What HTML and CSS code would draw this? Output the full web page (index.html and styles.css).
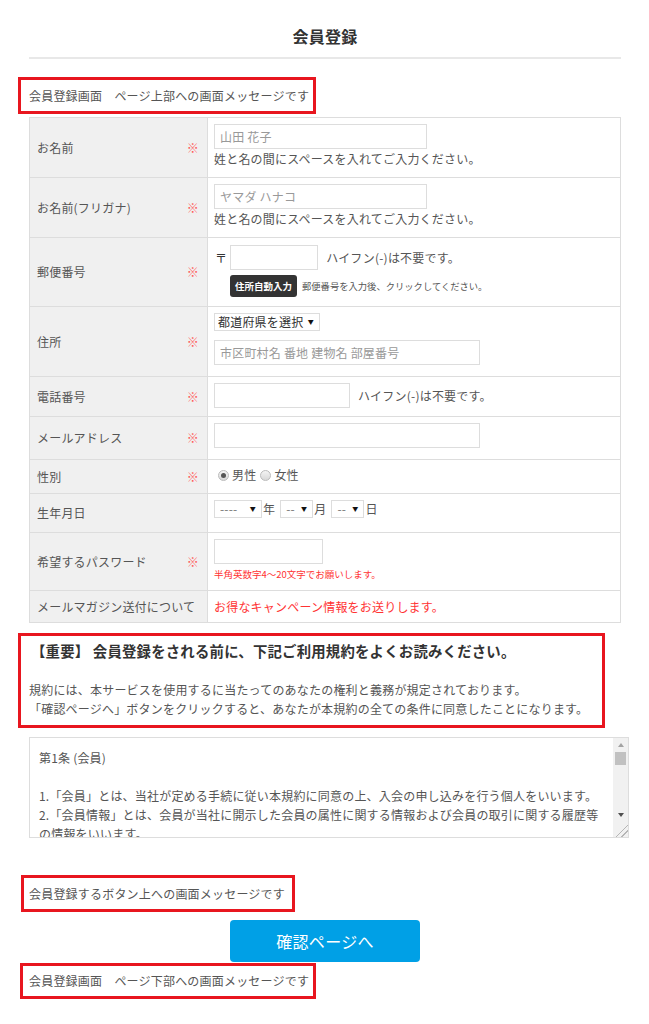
FILE: index.html
```html
<!DOCTYPE html>
<html lang="ja">
<head>
<meta charset="utf-8">
<title>会員登録</title>
<link rel="stylesheet" href="styles.css">
</head>
<body>
<div class="page">
  <h1 class="title">会員登録</h1>

  <p class="msg msg-top">会員登録画面　ページ上部への画面メッセージです</p>

  <div class="form">
    <div class="row row-name">
      <div class="label"><span>お名前</span><span class="req">※</span></div>
      <div class="val">
        <input class="in w-name" type="text" placeholder="山田 花子">
        <p class="hint">姓と名の間にスペースを入れてご入力ください。</p>
      </div>
    </div>
    <div class="row row-name">
      <div class="label"><span>お名前(フリガナ)</span><span class="req">※</span></div>
      <div class="val">
        <input class="in w-name" type="text" placeholder="ヤマダ ハナコ">
        <p class="hint">姓と名の間にスペースを入れてご入力ください。</p>
      </div>
    </div>
    <div class="row row-zip">
      <div class="label"><span>郵便番号</span><span class="req">※</span></div>
      <div class="val val-zip">
        <div class="line">
          <span class="zipmark">〒</span>
          <input class="in w-zip" type="text">
          <span class="note">ハイフン(-)は不要です。</span>
        </div>
        <div class="line line-auto">
          <button class="btn-auto" type="button">住所自動入力</button>
          <span class="tiny">郵便番号を入力後、クリックしてください。</span>
        </div>
      </div>
    </div>
    <div class="row row-addr">
      <div class="label"><span>住所</span><span class="req">※</span></div>
      <div class="val">
        <span class="sel sel-pref"><select><option>都道府県を選択</option></select></span>
        <input class="in w-wide addr" type="text" placeholder="市区町村名 番地 建物名 部屋番号">
      </div>
    </div>
    <div class="row row-tel">
      <div class="label"><span>電話番号</span><span class="req">※</span></div>
      <div class="val">
        <div class="line">
          <input class="in w-tel" type="text">
          <span class="note">ハイフン(-)は不要です。</span>
        </div>
      </div>
    </div>
    <div class="row row-mail">
      <div class="label"><span>メールアドレス</span><span class="req">※</span></div>
      <div class="val">
        <input class="in w-wide" type="text">
      </div>
    </div>
    <div class="row row-sex">
      <div class="label"><span>性別</span><span class="req">※</span></div>
      <div class="val">
        <div class="line radios">
          <label class="rd"><input type="radio" name="sex" checked>男性</label>
          <label class="rd"><input type="radio" name="sex">女性</label>
        </div>
      </div>
    </div>
    <div class="row row-birth">
      <div class="label"><span>生年月日</span></div>
      <div class="val">
        <div class="line birth">
          <span class="sel sel-y"><select><option>----</option></select></span><span class="unit">年</span>
          <span class="sel sel-md"><select><option>--</option></select></span><span class="unit">月</span>
          <span class="sel sel-md"><select><option>--</option></select></span><span class="unit">日</span>
        </div>
      </div>
    </div>
    <div class="row row-pass">
      <div class="label"><span>希望するパスワード</span><span class="req">※</span></div>
      <div class="val">
        <input class="in w-pass" type="password">
        <p class="pass-note">半角英数字4～20文字でお願いします。</p>
      </div>
    </div>
    <div class="row row-mag">
      <div class="label"><span>メールマガジン送付について</span></div>
      <div class="val">
        <p class="red">お得なキャンペーン情報をお送りします。</p>
      </div>
    </div>
  </div>

  <div class="msg msg-terms">
    <h2 class="terms-title">【重要】 会員登録をされる前に、下記ご利用規約をよくお読みください。</h2>
    <p class="terms-text">規約には、本サービスを使用するに当たってのあなたの権利と義務が規定されております。<br>「確認ページへ」ボタンをクリックすると、あなたが本規約の全ての条件に同意したことになります。</p>
  </div>

  <div class="terms-wrap">
    <textarea class="terms-box" readonly>第1条 (会員)

1.「会員」とは、当社が定める手続に従い本規約に同意の上、入会の申し込みを行う個人をいいます。
2.「会員情報」とは、会員が当社に開示した会員の属性に関する情報および会員の取引に関する履歴等の情報をいいます。
3. 本規約は、すべての会員に適用され、登録手続時および登録後にお守りいただく規約です。

第2条 (登録)

1. 会員資格
本規約に同意の上、所定の入会申込みをされたお客様は、所定の登録手続完了後に会員としての資格を有します。

第3条 (変更)

1. 会員は、氏名、住所など当社に届け出た事項に変更があった場合には、速やかに当社に連絡するものとします。</textarea>
    <div class="sbar" aria-hidden="true">
      <span class="sb-btn sb-up"></span>
      <span class="sb-track"><span class="sb-thumb"></span></span>
      <span class="sb-btn sb-down"></span>
      <span class="sb-corner"></span>
    </div>
  </div>

  <p class="msg msg-btn">会員登録するボタン上への画面メッセージです</p>

  <button class="btn-confirm" type="button">確認ページへ</button>

  <p class="msg msg-bottom">会員登録画面　ページ下部への画面メッセージです</p>
</div>
</body>
</html>
```

FILE: styles.css
```css
* {
  box-sizing: border-box;
}

html, body {
  margin: 0;
  padding: 0;
  background: #fff;
}

body {
  font-family: "Noto Sans CJK JP", "Noto Sans", sans-serif;
  font-size: 12px;
  letter-spacing: 0.2px;
  color: #555;
}

p, h1, h2 {
  margin: 0;
}

.page {
  margin: 0 28px 0 29px;
  padding-bottom: 25px;
}

.title {
  padding: 24px 0 9px;
  line-height: 24px;
  font-size: 16px;
  font-weight: bold;
  color: #333;
  text-align: center;
  border-bottom: 2px solid #e8e8e8;
}

/* red annotation boxes */
.msg {
  width: fit-content;
  border: 3px solid #e8161f;
}

.msg-top {
  margin: 18px 0 0 -11px;
  padding: 0 4px 0 8px;
  line-height: 31px;
}

.msg-terms {
  margin: 10px 0 0 -11px;
  padding: 5px 14px 7px 10px;
}

.msg-btn {
  margin: 37px 0 0 -8px;
  padding: 0 7px 0 5px;
  line-height: 31px;
}

.msg-bottom {
  margin: 1px 0 0 -9px;
  padding: 0 4px 0 6px;
  line-height: 30px;
}

/* form table */
.form {
  margin-top: 3px;
  border: 1px solid #ddd;
  border-top: 0;
}

.row {
  display: grid;
  grid-template-columns: 178px 1fr;
  border-top: 1px solid #ddd;
}

.row-name { min-height: 60px; }
.row-zip { min-height: 69px; }
.row-addr { min-height: 70px; }
.row-tel { min-height: 40px; }
.row-mail { min-height: 43px; }
.row-sex { min-height: 34px; }
.row-birth { min-height: 39px; }
.row-pass { min-height: 58px; }
.row-mag { min-height: 32px; }

.label {
  display: flex;
  align-items: center;
  justify-content: space-between;
  padding: 0 8px 0 7px;
  background: #f0f0f0;
  border-right: 1px solid #ddd;
  color: #555;
  line-height: 18px;
}

.req {
  color: #ff5a5a;
  font-size: 12px;
}

.val {
  display: flex;
  flex-direction: column;
  align-items: flex-start;
  padding: 6px 6px 0;
  line-height: 20px;
}

.val-zip {
  padding-top: 7px;
}

.line {
  display: flex;
  align-items: center;
}

.in {
  height: 25px;
  border: 1px solid #ddd;
  padding: 0 5px;
  font-family: inherit;
  font-size: 12px;
  letter-spacing: 0.2px;
  color: #333;
  background: #fff;
  outline: none;
}

.in::placeholder {
  color: #999;
}

.w-name { width: 213px; }
.w-zip { width: 88px; margin-left: 3px; }
.w-wide { width: 266px; }
.w-tel { width: 136px; }
.w-pass { width: 109px; height: 25px; }

.zipmark {
  margin-left: 1px;
  color: #333;
  font-size: 12px;
}

.note {
  margin-left: 8px;
}

.line-auto {
  margin: 5px 0 0 16px;
}

.btn-auto {
  height: 22px;
  padding: 0 5px;
  border: 0;
  border-radius: 3px;
  background: #333;
  color: #fff;
  font-family: inherit;
  font-size: 9.5px;
  font-weight: bold;
  line-height: 22px;
}

.tiny {
  margin-left: 5px;
  font-size: 9.3px;
  letter-spacing: 0;
  color: #555;
}

/* selects */
.sel {
  position: relative;
  display: inline-block;
}

.sel select {
  appearance: none;
  -webkit-appearance: none;
  display: block;
  height: 18px;
  border: 1px solid #ddd;
  border-radius: 0;
  background: #fff;
  padding: 0 0 0 3px;
  font-family: inherit;
  font-size: 12px;
  letter-spacing: 0.2px;
  line-height: 16px;
  color: #333;
}

.sel::after {
  content: "▼";
  position: absolute;
  right: 6px;
  top: 5px;
  font-size: 6px;
  line-height: 7px;
  color: #111;
  pointer-events: none;
}

.sel-pref select { width: 106px; }
.sel-y select { width: 48px; padding-left: 5px; color: #777; }
.sel-md select { width: 33px; padding-left: 5px; color: #777; }

.addr {
  margin-top: 9px;
}

.birth .unit {
  margin: 0 5px 0 1px;
  color: #555;
  line-height: 18px;
}

/* radios */
.radios {
  padding-left: 4px;
  line-height: 18px;
}

.rd {
  display: inline-flex;
  align-items: center;
  margin-right: 4px;
  color: #555;
}

.rd input {
  appearance: none;
  -webkit-appearance: none;
  width: 11px;
  height: 11px;
  margin: 0 3px 0 0;
  border: 1px solid #bbb;
  border-radius: 50%;
  background: linear-gradient(#f4f4f4, #d8d8d8);
  position: relative;
}

.rd input:checked::after {
  content: "";
  position: absolute;
  left: 2px;
  top: 2px;
  width: 5px;
  height: 5px;
  border-radius: 50%;
  background: #555;
}

.pass-note {
  font-size: 9.5px;
  letter-spacing: 0;
  color: #f33;
}

.red {
  color: #f33;
  font-size: 12px;
}

/* terms */
.terms-title {
  font-size: 14.4px;
  line-height: 20px;
  color: #333;
  font-weight: bold;
}

.terms-text {
  margin-top: 19px;
  margin-left: -2px;
  line-height: 19px;
  color: #555;
}

.terms-wrap {
  display: flex;
  margin-top: 9px;
  width: 600px;
  height: 101px;
  border: 1px solid #ddd;
  background: #fff;
}

.terms-box {
  flex: 1;
  min-width: 0;
  height: 100%;
  border: 0;
  padding: 10px 9px 0 9px;
  font-family: inherit;
  font-size: 12px;
  letter-spacing: 0.2px;
  line-height: 19px;
  color: #555;
  background: #fff;
  outline: none;
  resize: none;
  overflow: hidden;
}

/* drawn scrollbar */
.sbar {
  display: flex;
  flex-direction: column;
  width: 15px;
  background: #f1f1f1;
}

.sb-btn {
  display: flex;
  align-items: center;
  justify-content: center;
  height: 14px;
}

.sb-up::before {
  content: "";
  border-left: 3.5px solid transparent;
  border-right: 3.5px solid transparent;
  border-bottom: 4px solid #a3a3a3;
}

.sb-down::before {
  content: "";
  border-left: 3.5px solid transparent;
  border-right: 3.5px solid transparent;
  border-top: 4px solid #505050;
}

.sb-track {
  flex: 1;
  display: flex;
  flex-direction: column;
  padding: 0 2px;
}

.sb-thumb {
  height: 13px;
  background: #c1c1c1;
}

.sb-corner {
  height: 15px;
  background: linear-gradient(135deg, transparent 0 58%, #b5b5b5 58% 63%, transparent 63% 76%, #b5b5b5 76% 81%, transparent 81%);
}

.btn-confirm {
  display: block;
  margin: 8px auto 0;
  width: 190px;
  height: 42px;
  border: 0;
  border-radius: 4px;
  background: #00a0e6;
  color: #fff;
  font-family: inherit;
  font-size: 16px;
  letter-spacing: 0.3px;
}
```
